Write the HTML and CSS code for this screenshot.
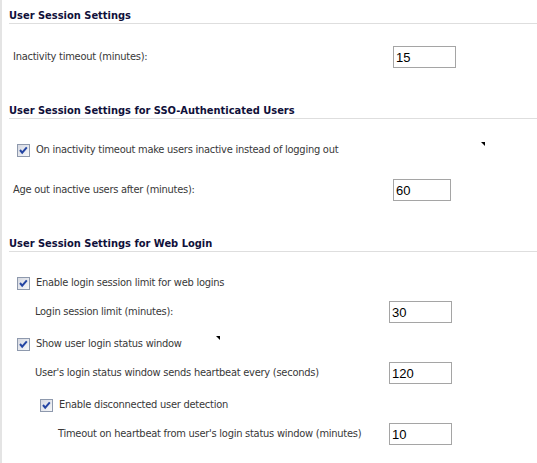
FILE: index.html
```html
<!DOCTYPE html>
<html lang="en">
<head>
    <meta charset="UTF-8">
    <title>User Session Settings</title>
    <link rel="stylesheet" href="styles.css">
</head>
<body>
    <div class="panel">
        <h2 class="section-title first">User Session Settings</h2>
        <div class="field field-gap">
            <label class="field-label">Inactivity timeout (minutes):</label>
            <input class="num" type="text" value="15">
        </div>

        <h2 class="section-title">User Session Settings for SSO-Authenticated Users</h2>
        <div class="check-row check-gap">
            <span class="check"><svg width="13" height="13" viewBox="0 0 13 13"><polyline points="3,6 5.2,8.6 9.8,3.4" /></svg></span>
            <span>On inactivity timeout make users inactive instead of logging out</span>
            <span class="tip tip-sso"></span>
        </div>
        <div class="field age-gap">
            <label class="field-label">Age out inactive users after (minutes):</label>
            <input class="num short" type="text" value="60">
        </div>

        <h2 class="section-title">User Session Settings for Web Login</h2>
        <div class="check-row check-gap">
            <span class="check"><svg width="13" height="13" viewBox="0 0 13 13"><polyline points="3,6 5.2,8.6 9.8,3.4" /></svg></span>
            <span>Enable login session limit for web logins</span>
        </div>
        <div class="field sub sub-gap">
            <label class="field-label">Login session limit (minutes):</label>
            <input class="num" type="text" value="30">
        </div>
        <div class="check-row row-gap">
            <span class="check"><svg width="13" height="13" viewBox="0 0 13 13"><polyline points="3,6 5.2,8.6 9.8,3.4" /></svg></span>
            <span>Show user login status window</span>
            <span class="tip tip-status"></span>
        </div>
        <div class="field sub sub-gap">
            <label class="field-label">User's login status window sends heartbeat every (seconds)</label>
            <input class="num" type="text" value="120">
        </div>
        <div class="check-row nested row-gap">
            <span class="check"><svg width="13" height="13" viewBox="0 0 13 13"><polyline points="3,6 5.2,8.6 9.8,3.4" /></svg></span>
            <span>Enable disconnected user detection</span>
        </div>
        <div class="field subsub sub-gap">
            <label class="field-label">Timeout on heartbeat from user's login status window (minutes)</label>
            <input class="num" type="text" value="10">
        </div>
    </div>
</body>
</html>
```

FILE: styles.css
```css
body {
    margin: 0;
    height: 100vh;
    box-sizing: border-box;
    border-left: 2px solid #e4e4e4;
    background: #fff;
    font-family: "DejaVu Sans Condensed", "DejaVu Sans", sans-serif;
    font-size: 11px;
    line-height: 14px;
    letter-spacing: -0.25px;
    color: #383838;
}

.panel {
    padding-bottom: 10px;
}

.section-title {
    margin: 36px 0 0 7px;
    padding: 0;
    font-size: 11px;
    line-height: 14px;
    font-weight: bold;
    letter-spacing: 0;
    color: #10103a;
    border-bottom: 1px solid #dedede;
}

.section-title.first {
    margin-top: 9px;
}

.field {
    display: flex;
    align-items: center;
    padding-left: 11px;
}

.field-label {
    flex: 0 0 380px;
}

.field.sub {
    padding-left: 33px;
}

.field.sub .field-label {
    flex-basis: 354px;
}

.field.subsub {
    padding-left: 56px;
}

.field.subsub .field-label {
    flex-basis: 331px;
}

.num {
    box-sizing: border-box;
    width: 63px;
    height: 22px;
    margin: 0;
    padding: 0 2px;
    border: 1px solid #a5a5a5;
    font-family: "Liberation Sans", Arial, sans-serif;
    font-size: 13px;
    letter-spacing: 0;
    color: #000;
    background: #fff;
}

.num.short {
    width: 58px;
}

.check-row {
    position: relative;
    display: flex;
    align-items: center;
    height: 16px;
    padding-left: 15px;
}

.check-row.nested {
    padding-left: 38px;
}

.check {
    box-sizing: border-box;
    width: 13px;
    height: 13px;
    margin-right: 6px;
    border: 1px solid #8e99ad;
    background: linear-gradient(135deg, #d6d9e2, #f6f7f9);
    display: flex;
}

.check svg {
    margin: -1px;
}

.check polyline {
    fill: none;
    stroke: #2445a3;
    stroke-width: 2;
}

.tip {
    position: absolute;
    width: 0;
    height: 0;
    border-top: 4px solid #000;
    border-left: 4px solid transparent;
}

.tip-sso {
    left: 479px;
    top: 0;
}

.tip-status {
    left: 214px;
    top: 0;
}

.field-gap {
    margin-top: 22px;
}

.check-gap {
    margin-top: 23px;
}

.age-gap {
    margin-top: 21px;
}

.sub-gap {
    margin-top: 10px;
}

.row-gap {
    margin-top: 13px;
}
```
